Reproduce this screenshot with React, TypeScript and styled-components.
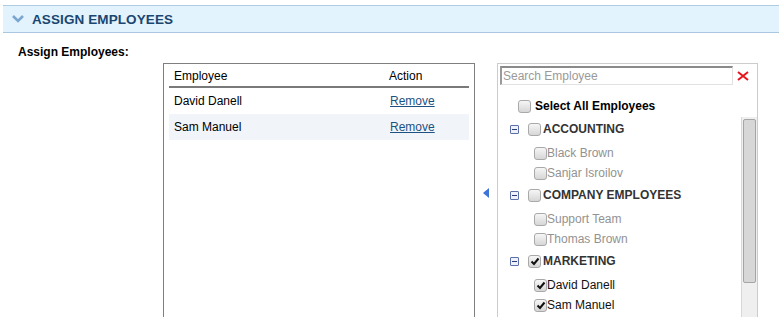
import React from "react";
import styled, { createGlobalStyle } from "styled-components";

const GlobalStyle = createGlobalStyle`
    html, body {
        margin: 0;
        padding: 0;
        background: #ffffff;
        overflow: hidden;
    }
    body {
        font-family: "Liberation Sans", Arial, sans-serif;
        font-size: 12px;
        color: #000;
    }
`;

/* Section header */
const SectionBar = styled.div`
    margin: 5px 0 0 3px;
    height: 26px;
    display: flex;
    align-items: center;
    gap: 8px;
    padding-left: 9px;
    background: #e3f3fd;
    border-top: 1px solid #b0cde3;
    border-bottom: 1px solid #a9c6de;
`;
const SectionTitle = styled.span`
    font-weight: bold;
    font-size: 13.5px;
    color: #1a4670;
    letter-spacing: 0.1px;
`;
const FieldLabel = styled.div`
    margin: 14px 0 0 18px;
    font-weight: bold;
    font-size: 12px;
    height: 11px;
    line-height: 11px;
`;

/* Assign area */
const AssignRow = styled.div`
    display: flex;
    flex-direction: row;
    padding-left: 163px;
    margin-top: 5px;
    height: 260px;
`;
const TableBox = styled.div`
    width: 300px;
    border: 1px solid #7f7f7f;
    border-bottom: none;
    padding: 0 5px;
`;
const Table = styled.table`
    width: 100%;
    border-collapse: collapse;
    font-size: 12px;
`;
const HeadCell = styled.th`
    text-align: left;
    font-weight: normal;
    height: 21px;
    padding: 1px 0 0 5px;
    border-bottom: 2px solid #7a7a7a;
`;
const Row = styled.tr<{ $alt?: boolean }>`
    background: ${({ $alt }) => ($alt ? "#f1f5fa" : "transparent")};
`;
const Cell = styled.td<{ $w?: number }>`
    height: 26px;
    padding: 0 0 0 5px;
    width: ${({ $w }) => ($w ? `${$w}px` : "auto")};
`;
const RemoveLink = styled.a`
    color: #1b5283;
    text-decoration: underline;
    cursor: pointer;
    margin-left: 1px;
`;

const ArrowCol = styled.div`
    width: 22px;
    display: flex;
    align-items: center;
    justify-content: flex-start;
    padding-left: 8px;
    box-sizing: border-box;
`;

/* Tree panel */
const TreePanel = styled.div`
    width: 259px;
    border: 1px solid #cccccc;
    border-bottom: none;
    display: flex;
    flex-direction: column;
`;
const SearchRow = styled.div`
    display: flex;
    align-items: center;
    padding: 2px 0 0 2px;
    gap: 4px;
`;
const SearchInput = styled.input`
    width: 233px;
    height: 19px;
    box-sizing: border-box;
    border: 1px solid #e2e2e2;
    border-top: 2px solid #8a8a8a;
    border-left: 2px solid #9a9a9a;
    padding: 0 1px;
    font-family: "Liberation Sans", Arial, sans-serif;
    font-size: 12px;
    outline: none;
    &::placeholder {
        color: #9a9a9a;
    }
`;
const SelectAllRow = styled.div`
    display: flex;
    align-items: center;
    gap: 4px;
    padding-left: 20px;
    margin-top: 13px;
    height: 16px;
    font-weight: bold;
`;
const TreeBody = styled.div`
    display: flex;
    flex-direction: row;
    flex: 1;
    margin-top: 3px;
`;
const TreeList = styled.div`
    flex: 1;
    padding-left: 12px;
`;
const GroupRow = styled.div`
    display: flex;
    align-items: center;
    height: 24px;
`;
const GroupLabel = styled.span`
    font-weight: bold;
    color: #333;
    margin-left: 2px;
`;
const ChildList = styled.div`
    margin-top: 2px;
    padding-left: 24px;
`;
const ChildRow = styled.div`
    display: flex;
    align-items: center;
    height: 20px;
`;
const ChildLabel = styled.span<{ $on: boolean }>`
    color: ${({ $on }) => ($on ? "#111" : "#929292")};
    margin-left: 0;
`;
const Toggle = styled.span`
    width: 7px;
    height: 7px;
    border: 1px solid #5d6fa8;
    border-radius: 1px;
    background: #eef1fa;
    margin-right: 9px;
    position: relative;
    &::after {
        content: "";
        position: absolute;
        left: 1px;
        right: 1px;
        top: 3px;
        height: 1px;
        background: #2a3a7a;
    }
`;
const Box = styled.span`
    width: 11px;
    height: 11px;
    border: 1px solid #a9a9a9;
    border-radius: 3px;
    background: linear-gradient(#f6f6f6, #d6d6d6);
    display: inline-flex;
    align-items: center;
    justify-content: center;
    flex-shrink: 0;
`;
const ScrollTrack = styled.div`
    width: 13px;
    background: #efefef;
    border-left: 1px solid #d8d8d8;
    padding: 2px 1px 0 1px;
`;
const ScrollThumb = styled.div`
    height: 162px;
    background: #d7d7d7;
    border: 1px solid #a5a5a5;
    border-radius: 2px;
`;

const Check: React.FC<{ checked?: boolean }> = ({ checked }) => (
    <Box>
        {checked && (
            <svg width="10" height="9" viewBox="0 0 10 9">
                <path d="M1.5 4.5 L4 7 L8.5 1.5" stroke="#111" strokeWidth="2" fill="none" />
            </svg>
        )}
    </Box>
);

const Chevron = () => (
    <svg width="12" height="8" viewBox="0 0 12 8">
        <path d="M1 1 L6 6 L11 1" stroke="#7aa7cf" strokeWidth="2.6" fill="none" />
    </svg>
);

const groups = [
    { name: "ACCOUNTING", checked: false, members: [{ name: "Black Brown", on: false }, { name: "Sanjar Isroilov", on: false }] },
    { name: "COMPANY EMPLOYEES", checked: false, members: [{ name: "Support Team", on: false }, { name: "Thomas Brown", on: false }] },
    { name: "MARKETING", checked: true, members: [{ name: "David Danell", on: true }, { name: "Sam Manuel", on: true }] },
];

const assigned = ["David Danell", "Sam Manuel"];

const App: React.FC = () => {
    return <>
        <GlobalStyle />
        <SectionBar>
            <Chevron />
            <SectionTitle>ASSIGN EMPLOYEES</SectionTitle>
        </SectionBar>
        <FieldLabel>Assign Employees:</FieldLabel>
        <AssignRow>
            <TableBox>
                <Table>
                    <thead>
                        <tr>
                            <HeadCell>Employee</HeadCell>
                            <HeadCell style={{ width: 80 }}>Action</HeadCell>
                        </tr>
                    </thead>
                    <tbody>
                        {assigned.map((name, i) => (
                            <Row key={name} $alt={i % 2 === 1}>
                                <Cell>{name}</Cell>
                                <Cell $w={80}><RemoveLink>Remove</RemoveLink></Cell>
                            </Row>
                        ))}
                    </tbody>
                </Table>
            </TableBox>
            <ArrowCol>
                <svg width="6" height="10" viewBox="0 0 6 10">
                    <path d="M6 0 L0 5 L6 10 Z" fill="#3e73d8" />
                </svg>
            </ArrowCol>
            <TreePanel>
                <SearchRow>
                    <SearchInput placeholder="Search Employee" />
                    <svg width="12" height="10" viewBox="0 0 12 10">
                        <path d="M1 1 L11 9 M11 1 L1 9" stroke="#e8141b" strokeWidth="2" />
                    </svg>
                </SearchRow>
                <SelectAllRow>
                    <Check />
                    <span>Select All Employees</span>
                </SelectAllRow>
                <TreeBody>
                    <TreeList>
                        {groups.map(g => (
                            <div key={g.name}>
                                <GroupRow>
                                    <Toggle />
                                    <Check checked={g.checked} />
                                    <GroupLabel>{g.name}</GroupLabel>
                                </GroupRow>
                                <ChildList>
                                    {g.members.map(m => (
                                        <ChildRow key={m.name}>
                                            <Check checked={m.on} />
                                            <ChildLabel $on={m.on}>{m.name}</ChildLabel>
                                        </ChildRow>
                                    ))}
                                </ChildList>
                            </div>
                        ))}
                    </TreeList>
                    <ScrollTrack>
                        <ScrollThumb />
                    </ScrollTrack>
                </TreeBody>
            </TreePanel>
        </AssignRow>
    </>;
};

export default App;
